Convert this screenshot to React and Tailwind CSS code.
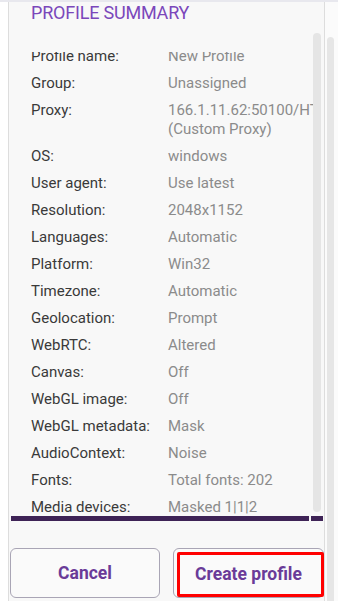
import React from "react";

const rows = [
  ["Profile name:", "New Profile"],
  ["Group:", "Unassigned"],
  ["Proxy:", ["166.1.11.62:50100/HTTP", "(Custom Proxy)"]],
  ["OS:", "windows"],
  ["User agent:", "Use latest"],
  ["Resolution:", "2048x1152"],
  ["Languages:", "Automatic"],
  ["Platform:", "Win32"],
  ["Timezone:", "Automatic"],
  ["Geolocation:", "Prompt"],
  ["WebRTC:", "Altered"],
  ["Canvas:", "Off"],
  ["WebGL image:", "Off"],
  ["WebGL metadata:", "Mask"],
  ["AudioContext:", "Noise"],
  ["Fonts:", "Total fonts: 202"],
  ["Media devices:", "Masked 1|1|2"],
];

export default function App() {
  return (
    <div className="w-[338px] h-[601px] bg-white overflow-hidden flex flex-col font-['Roboto',sans-serif]">
      <div className="h-[2px] bg-[#e8e8ee] shrink-0" />
      <div className="flex flex-1 min-h-0">
        <div className="w-[8px] shrink-0 bg-white" />
        <div className="w-[317px] shrink-0 border-x border-[#dddddd] bg-[#f8f8f8] flex flex-col">
          <div className="h-[31px] pl-[22px] text-[18px] leading-[21px] tracking-[-0.2px] text-[#7b47bb] uppercase">
            Profile Summary
          </div>
          <div className="flex h-[483px]">
            <div className="w-[304px] flex flex-col">
              <div className="h-[19px] shrink-0" />
              <div className="flex-1 overflow-hidden">
                <div className="mt-[-5px] pl-[22px] flex flex-col gap-[8px] text-[15px] leading-[19px]">
                  {rows.map(([label, value]) => (
                    <div key={label} className="flex">
                      <div className="w-[137px] shrink-0 text-[#3a3a3a]">{label}</div>
                      <div className="text-[#8b8b8b] whitespace-nowrap">
                        {Array.isArray(value) ? (
                          <>
                            <div>{value[0]}</div>
                            <div>{value[1]}</div>
                          </>
                        ) : (
                          value
                        )}
                      </div>
                    </div>
                  ))}
                </div>
              </div>
            </div>
            <div className="w-[8px] shrink-0">
              <div className="h-[479px] w-[8px] rounded-full bg-[#e5e5e5]" />
            </div>
          </div>
          <div className="flex h-[5px] shrink-0 ml-[2px]">
            <div className="w-[298px] bg-[#3e2356]" />
            <div className="w-[2px]" />
            <div className="w-[12px] bg-[#3e2356]" />
          </div>
          <div className="flex mt-[27px] ml-[1px] gap-[13px]">
            <button className="w-[150px] h-[50px] rounded-[6px] border border-[#a9a5b5] bg-[#fafafa] text-[17.5px] font-bold text-[#6a3b98]">
              Cancel
            </button>
            <button className="relative w-[151px] h-[50px] rounded-[6px] border border-[#a9a5b5] bg-[#fafafa] text-[17.5px] font-bold text-[#6a3b98]">
              <span className="absolute left-[3px] top-[3px] right-[-1px] bottom-[0px] border-[3px] border-[#ff0000] rounded-[2px]" />
              <span className="relative top-[1px]">Create profile</span>
            </button>
          </div>
        </div>
        <div className="flex-1 bg-[#fbfbfb]">
          <div className="ml-[2px] mt-[35px] w-[7px] h-[600px] rounded-t-full bg-[#e6e6e6]" />
        </div>
      </div>
    </div>
  );
}
